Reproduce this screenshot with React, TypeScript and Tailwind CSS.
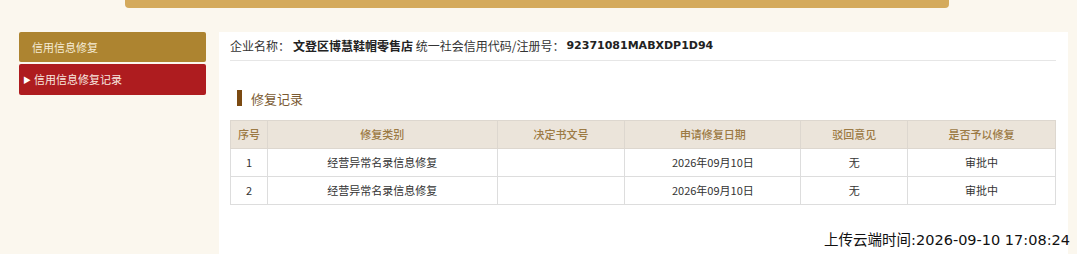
import React from "react";

const rows = [
  { no: "1", type: "经营异常名录信息修复", doc: "", date: "2026年09月10日", reject: "无", status: "审批中" },
  { no: "2", type: "经营异常名录信息修复", doc: "", date: "2026年09月10日", reject: "无", status: "审批中" },
];

const cols = ["w-[37px]", "w-[230px]", "w-[128px]", "w-[176px]", "w-[107px]", "w-[148px]"];
const heads = ["序号", "修复类别", "决定书文号", "申请修复日期", "驳回意见", "是否予以修复"];

export default function App() {
  return (
    <div className="w-[1077px] h-[254px] overflow-hidden bg-[#fbf7ee] font-['Noto_Sans_CJK_SC',sans-serif]">
      <div className="ml-[125px] w-[824px] h-[8px] bg-[#d4aa5c] rounded-b-[4px]" />
      <div className="flex mt-[24px]">
        <div className="ml-[19px] w-[187px] flex flex-col gap-[2px]">
          <div className="h-[30px] bg-[#ad8430] rounded-[2px] flex items-center pl-[13px] text-[11px] text-[#f6ecd6]">
            信用信息修复
          </div>
          <div className="h-[31px] bg-[#ae1c1f] rounded-[2px] flex items-center pl-[4px] text-[11px] text-[#f8e8e0]">
            <span className="text-[8px] text-white mr-[3px] leading-none">▶</span>
            信用信息修复记录
          </div>
        </div>
        <div className="ml-[13px] w-[849px] h-[230px] bg-white pl-[11px] pr-[12px]">
          <div className="h-[29px] border-b border-[#e6e6e6] flex items-center text-[12px] text-[#333] whitespace-pre">
            <span>企业名称：</span>
            <span className="ml-[3px] font-bold text-[#222]">文登区博慧鞋帽零售店</span>
            <span> 统一社会信用代码/注册号：</span>
            <span className="ml-[2px] font-bold text-[#222] text-[11px] font-['DejaVu_Sans',sans-serif]">92371081MABXDP1D94</span>
          </div>
          <div className="mt-[29px] ml-[7px] flex items-center h-[16px]">
            <div className="w-[5px] h-[16px] bg-[#7b4a12]" />
            <span className="ml-[9px] text-[13px] text-[#7a5a32] leading-none">修复记录</span>
          </div>
          <table className="mt-[14px] border-collapse text-[11px] text-[#333] table-fixed">
            <thead>
              <tr className="h-[28px] bg-[#ebe4da]">
                {heads.map((h, i) => (
                  <th key={h} className={`${cols[i]} border border-[#ddd7cf] font-medium text-[#9c7a44] text-center`}>
                    {h}
                  </th>
                ))}
              </tr>
            </thead>
            <tbody>
              {rows.map((r) => (
                <tr key={r.no} className="h-[28px]">
                  <td className="border border-[#dddddd] text-center">{r.no}</td>
                  <td className="border border-[#dddddd] text-center">{r.type}</td>
                  <td className="border border-[#dddddd] text-center">{r.doc}</td>
                  <td className="border border-[#dddddd] text-center">{r.date}</td>
                  <td className="border border-[#dddddd] text-center">{r.reject}</td>
                  <td className="border border-[#dddddd] text-center">{r.status}</td>
                </tr>
              ))}
            </tbody>
          </table>
          <div className="mt-[25px] text-right -mr-[14px] text-[14.5px] text-[#111] font-['DejaVu_Sans','Noto_Sans_CJK_SC',sans-serif]">
            上传云端时间:2026-09-10 17:08:24
          </div>
        </div>
      </div>
    </div>
  );
}
